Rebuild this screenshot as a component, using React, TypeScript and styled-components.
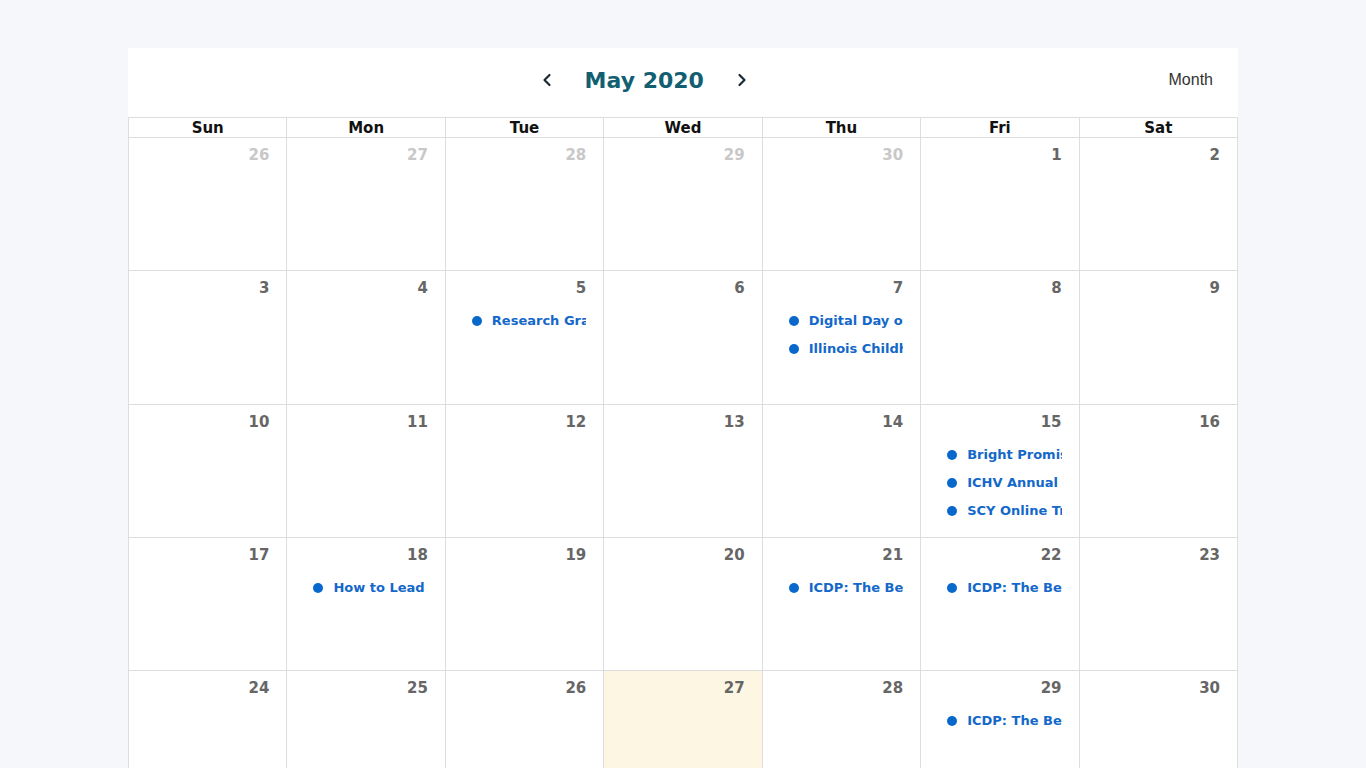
import React from "react";
import styled, { createGlobalStyle } from "styled-components";

const Global = createGlobalStyle`
  html, body { margin: 0; padding: 0; background: #f5f7fb; }
  body { font-family: "DejaVu Sans", "Open Sans", sans-serif; overflow: hidden; }
`;

const Page = styled.div`
  padding: 48px 128px 0;
  height: 768px;
  box-sizing: border-box;
`;

const Card = styled.div`
  background: #fff;
  width: 1110px;
`;

const Toolbar = styled.div`
  height: 69px;
  box-sizing: border-box;
  padding-bottom: 5px;
  display: flex;
  justify-content: space-between;
  align-items: center;
`;

const Spacer = styled.div`
  width: 0;
`;

const Nav = styled.div`
  display: flex;
  align-items: center;
  gap: 32px;
  margin-right: 8px;
`;

const Title = styled.h2`
  margin: 0;
  font-family: "DejaVu Sans", sans-serif;
  font-weight: 700;
  font-size: 22px;
  color: #135f72;
`;

const Arrow = styled.button`
  border: 0;
  background: none;
  padding: 0;
  width: 12px;
  height: 16px;
  display: flex;
  align-items: center;
  justify-content: center;
  cursor: pointer;
`;

const ViewLabel = styled.div`
  padding-right: 25px;
  padding-bottom: 1px;
  font-family: "Liberation Sans", Arial, sans-serif;
  font-size: 16px;
  color: #333;
`;

const Grid = styled.div`
  display: grid;
  grid-template-columns: repeat(7, 1fr);
  grid-template-rows: 21px repeat(5, 133.33px);
  border-left: 1px solid #ddd;
`;

const HeadCell = styled.div`
  border-top: 1px solid #ddd;
  border-bottom: 1px solid #ddd;
  border-right: 1px solid #ddd;
  text-align: center;
  font-weight: 700;
  font-size: 15px;
  line-height: 21px;
  color: #111;
  overflow: hidden;
`;

const DayCell = styled.div<{ $today?: boolean }>`
  border-right: 1px solid #ddd;
  border-bottom: 1px solid #ddd;
  background: ${(p) => (p.$today ? "#fdf6e3" : "#fff")};
  padding: 8px 17px 0 0;
  box-sizing: border-box;
  overflow: hidden;
`;

const DayNum = styled.div<{ $muted?: boolean }>`
  text-align: right;
  font-weight: 700;
  font-size: 15px;
  line-height: 18px;
  color: ${(p) => (p.$muted ? "#c8c8c8" : "#666")};
`;

const Events = styled.div`
  margin-top: 15px;
  display: flex;
  flex-direction: column;
  gap: 10px;
  padding-left: 26px;
`;

const Event = styled.div`
  display: flex;
  align-items: center;
  gap: 10px;
  white-space: nowrap;
  overflow: hidden;
  font-weight: 700;
  font-size: 13px;
  line-height: 18px;
  color: #1368c9;
`;

const Dot = styled.span`
  flex: none;
  width: 10px;
  height: 10px;
  border-radius: 50%;
  background: #0868cc;
`;

const EventText = styled.span`
  overflow: hidden;
`;

const days = ["Sun", "Mon", "Tue", "Wed", "Thu", "Fri", "Sat"];

type Cell = { n: number; muted?: boolean; today?: boolean; events?: string[] };

const cells: Cell[] = [
  { n: 26, muted: true }, { n: 27, muted: true }, { n: 28, muted: true }, { n: 29, muted: true }, { n: 30, muted: true }, { n: 1 }, { n: 2 },
  { n: 3 }, { n: 4 }, { n: 5, events: ["Research Grant Proposals"] }, { n: 6 }, { n: 7, events: ["Digital Day of Action", "Illinois Childhood"] }, { n: 8 }, { n: 9 },
  { n: 10 }, { n: 11 }, { n: 12 }, { n: 13 }, { n: 14 }, { n: 15, events: ["Bright Promises", "ICHV Annual Meeting", "SCY Online Training"] }, { n: 16 },
  { n: 17 }, { n: 18, events: ["How to Lead"] }, { n: 19 }, { n: 20 }, { n: 21, events: ["ICDP: The Best"] }, { n: 22, events: ["ICDP: The Best"] }, { n: 23 },
  { n: 24 }, { n: 25 }, { n: 26 }, { n: 27, today: true }, { n: 28 }, { n: 29, events: ["ICDP: The Best"] }, { n: 30 },
];

const Chevron = ({ dir }: { dir: "left" | "right" }) => (
  <svg width="12" height="14" viewBox="0 0 12 14" fill="none">
    <path
      d={dir === "left" ? "M8.5 2 L3.5 7 L8.5 12" : "M3.5 2 L8.5 7 L3.5 12"}
      stroke="#1b2a33"
      strokeWidth="2.2"
      strokeLinecap="round"
      strokeLinejoin="round"
    />
  </svg>
);

export default function App() {
  return (
    <>
      <Global />
      <Page>
        <Card>
          <Toolbar>
            <Spacer />
            <Nav>
              <Arrow aria-label="previous"><Chevron dir="left" /></Arrow>
              <Title>May 2020</Title>
              <Arrow aria-label="next"><Chevron dir="right" /></Arrow>
            </Nav>
            <ViewLabel>Month</ViewLabel>
          </Toolbar>
          <Grid>
            {days.map((d) => (
              <HeadCell key={d}>{d}</HeadCell>
            ))}
            {cells.map((c, i) => (
              <DayCell key={i} $today={c.today}>
                <DayNum $muted={c.muted}>{c.n}</DayNum>
                {c.events && (
                  <Events>
                    {c.events.map((e, j) => (
                      <Event key={j}>
                        <Dot />
                        <EventText>{e}</EventText>
                      </Event>
                    ))}
                  </Events>
                )}
              </DayCell>
            ))}
          </Grid>
        </Card>
      </Page>
    </>
  );
}
